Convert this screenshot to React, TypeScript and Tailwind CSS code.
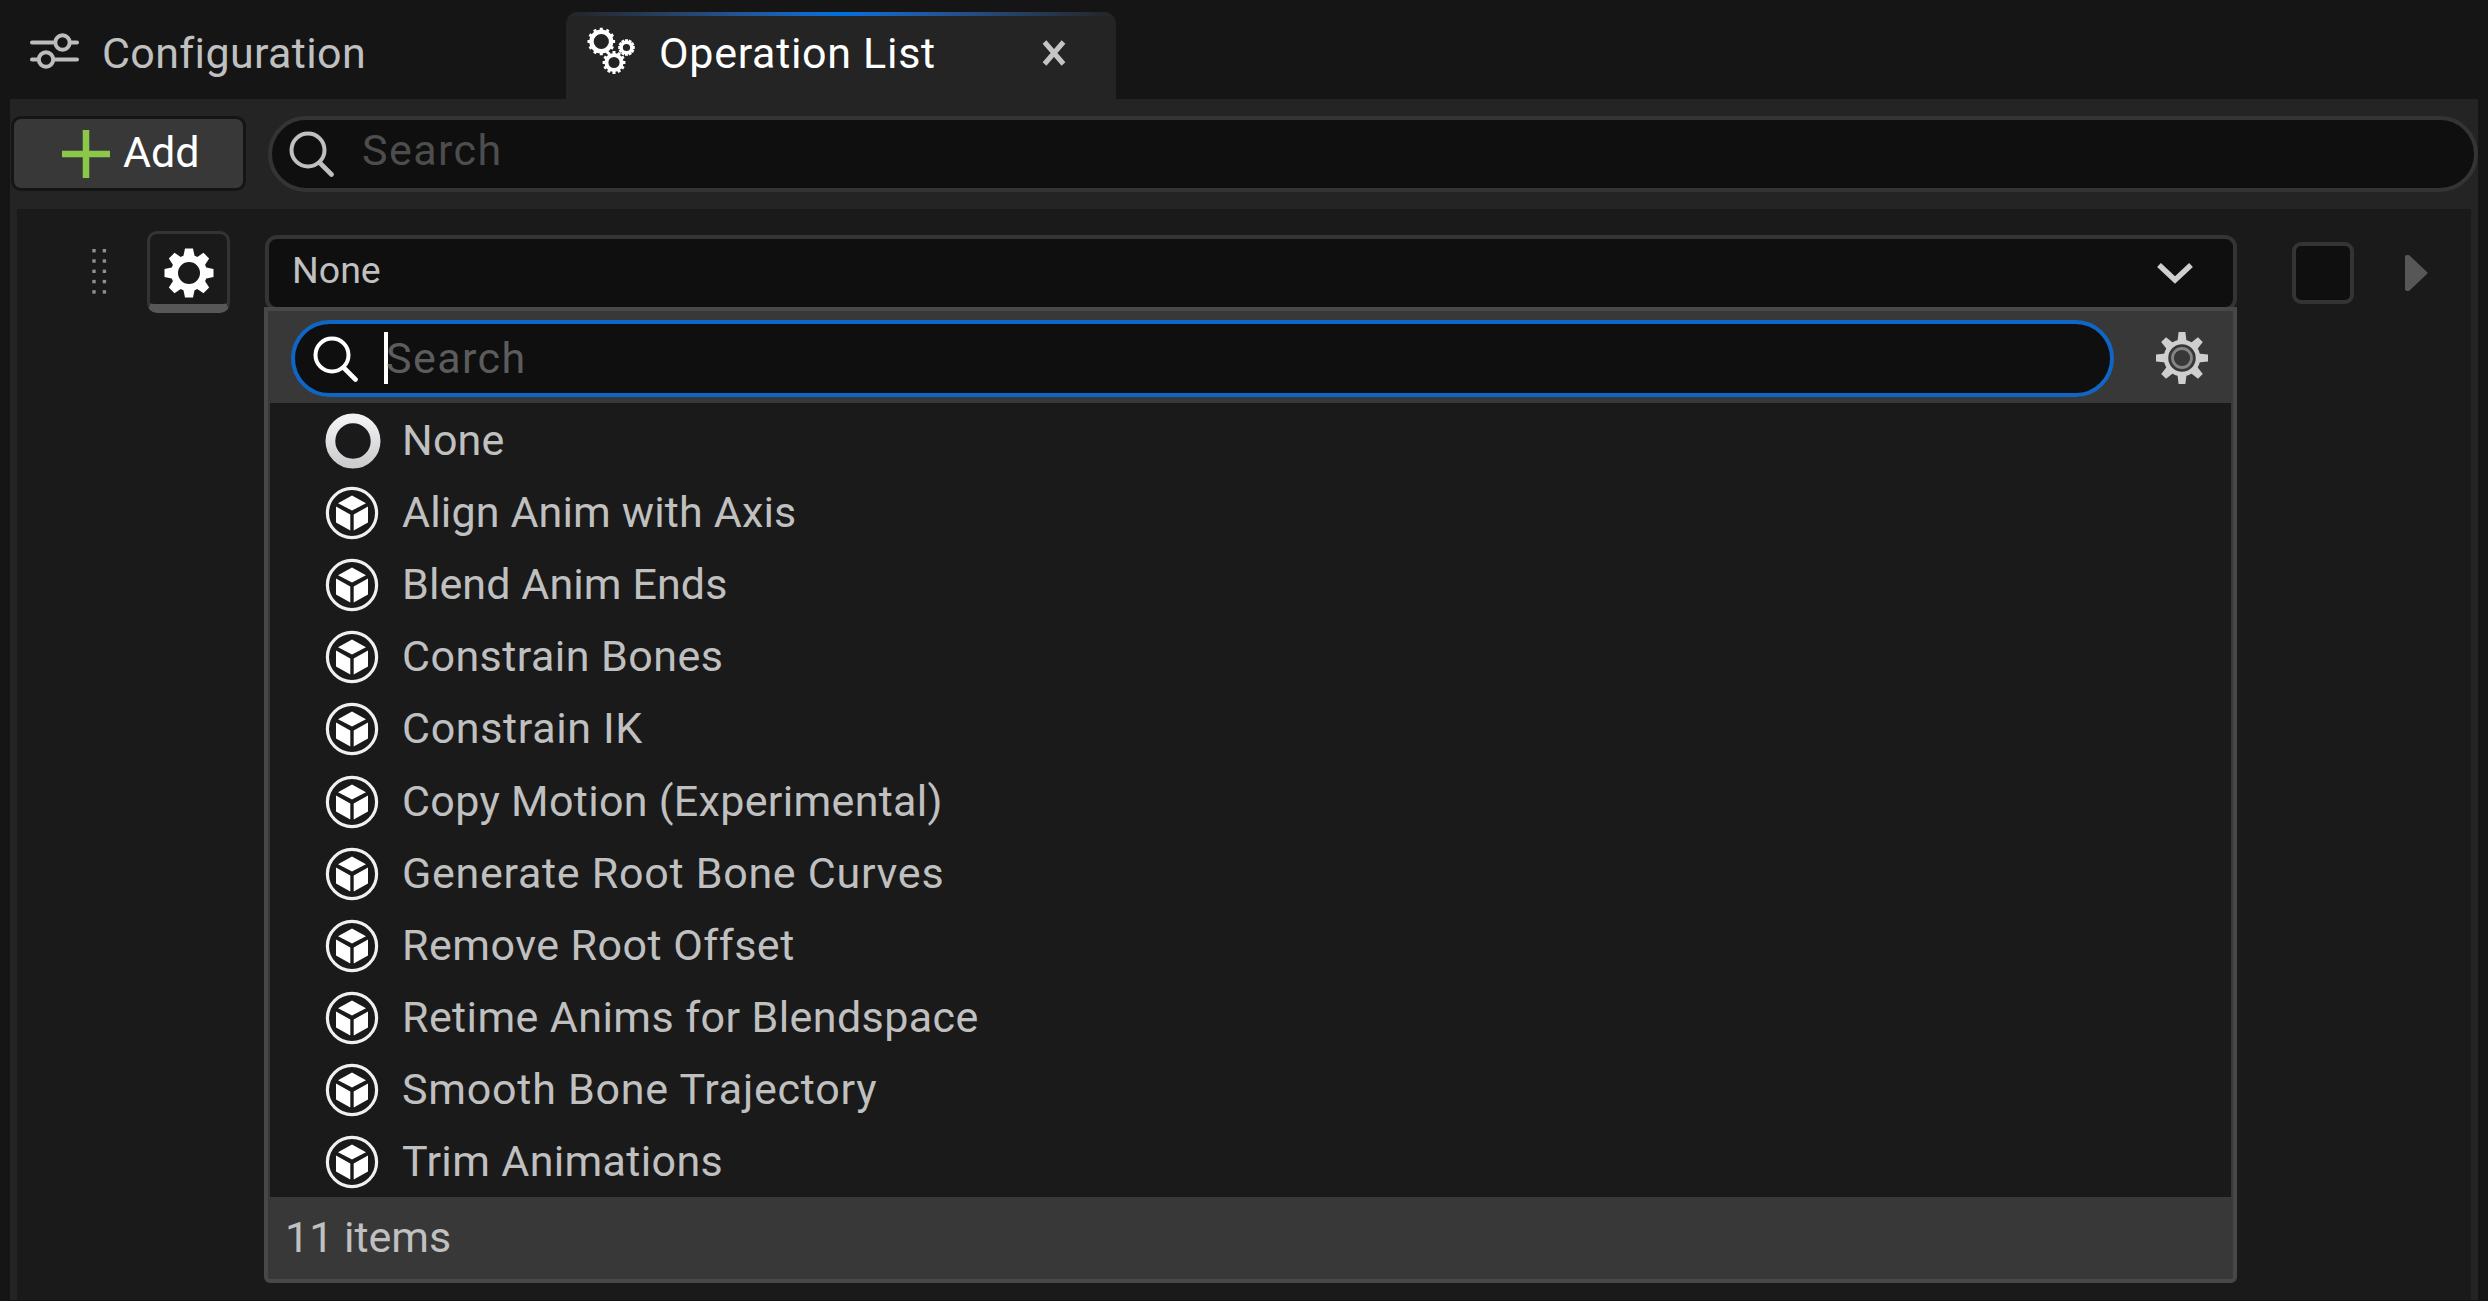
import React from "react";

const ITEMS = [
  { label: "None", tracking: "tracking-[0.2px]" },
  { label: "Align Anim with Axis", tracking: "tracking-[0.15px]" },
  { label: "Blend Anim Ends", tracking: "tracking-[0.1px]" },
  { label: "Constrain Bones", tracking: "tracking-[0.45px]" },
  { label: "Constrain IK", tracking: "tracking-[0.65px]" },
  { label: "Copy Motion (Experimental)", tracking: "tracking-[0.32px]" },
  { label: "Generate Root Bone Curves", tracking: "tracking-[0.72px]" },
  { label: "Remove Root Offset", tracking: "tracking-[0.48px]" },
  { label: "Retime Anims for Blendspace", tracking: "tracking-[0.41px]" },
  { label: "Smooth Bone Trajectory", tracking: "tracking-[0.76px]" },
  { label: "Trim Animations", tracking: "tracking-[0.35px]" },
];

const EIGHT = [0, 45, 90, 135, 180, 225, 270, 315];
const TWELVE = [0, 30, 60, 90, 120, 150, 180, 210, 240, 270, 300, 330];

function SlidersIcon() {
  return (
    <svg className="h-[36px] w-[50px] shrink-0" viewBox="0 0 50 36" fill="none" stroke="#bdbdbd" strokeWidth="4" strokeLinecap="round">
      <path d="M3 9.5H24M42 9.5H48M3 26.500H8M26 26.500H48" />
      <circle cx="33.500" cy="9.500" r="7.200" />
      <circle cx="17" cy="26.500" r="7.200" />
    </svg>
  );
}

function Cog({ cx, cy, r, w, tooth }: { cx: number; cy: number; r: number; w: number; tooth: number }) {
  return (
    <g stroke="#ffffff" fill="none">
      <circle cx={cx} cy={cy} r={r} strokeWidth={w} />
      {TWELVE.map((a) => (
        <path key={a} d={`M${cx} ${cy - r}V${cy - r - tooth}`} strokeWidth="3" transform={`rotate(${a} ${cx} ${cy})`} />
      ))}
    </g>
  );
}

function GearsIcon() {
  return (
    <svg className="h-[50px] w-[52px] shrink-0" viewBox="0 0 52 50">
      <Cog cx={15.3} cy={14.5} r={9.8} w={4.400} tooth={4} />
      <Cog cx={28} cy={35.5} r={7.600} w={4} tooth={3.8} />
      <Cog cx={40.500} cy={20.5} r={5.300} w={3.400} tooth={3} />
    </svg>
  );
}

function SearchIcon({ color }: { color: string }) {
  return (
    <svg className="h-[46px] w-[46px] shrink-0" viewBox="0 0 46 46" fill="none" stroke={color} strokeWidth="4" strokeLinecap="round">
      <circle cx="19" cy="19" r="16.500" />
      <path d="M31 32L42.500 43.500" strokeWidth="4.600" />
    </svg>
  );
}

function SolidGear() {
  return (
    <svg className="h-[50px] w-[50px]" viewBox="-25 -25 50 50" fill="none" stroke="#ffffff">
      <circle r="14.500" strokeWidth="7" />
      {EIGHT.map((a) => (
        <path key={a} d="M-6 -15L-4 -24.500H4L6 -15Z" fill="#ffffff" stroke="none" transform={`rotate(${a})`} />
      ))}
    </svg>
  );
}

function OutlineGear() {
  return (
    <svg className="h-[54px] w-[54px]" viewBox="-27 -27 54 54" fill="none" stroke="#cfcfcf">
      <circle r="16" strokeWidth="4.500" />
      <circle r="9.500" strokeWidth="2.800" stroke="#858585" />
      {EIGHT.map((a) => (
        <path key={a} d="M-4.600 -16L-3.400 -26H3.400L4.600 -16Z" fill="#cfcfcf" stroke="none" transform={`rotate(${a})`} />
      ))}
    </svg>
  );
}

function CubeIcon() {
  return (
    <svg className="h-[54px] w-[54px] shrink-0" viewBox="-27 -27 54 54">
      <circle r="24.600" fill="none" stroke="#f0f0f0" strokeWidth="3.200" />
      <path d="M0 -17.500L14 -9.800L0 -2.400L-14 -9.800Z" fill="#ffffff" />
      <path d="M-16 -6.500L-1.700 1.500V17.500L-16 9.500ZM16 -6.500L1.700 1.500V17.500L16 9.500Z" fill="#ffffff" />
    </svg>
  );
}

function RingIcon() {
  return (
    <svg className="h-[56px] w-[56px] shrink-0" viewBox="0 0 56 56">
      <defs>
        <linearGradient id="ring" x1="0" y1="0" x2="0" y2="1">
          <stop offset="0" stopColor="#f2f2f4" />
          <stop offset="1" stopColor="#cdcdcf" />
        </linearGradient>
      </defs>
      <circle cx="28" cy="28" r="22.600" fill="none" stroke="url(#ring)" strokeWidth="9.800" />
    </svg>
  );
}

function DragHandle() {
  return (
    <svg className="h-[50px] w-[16px] shrink-0" viewBox="0 0 16 50" fill="#8f8f8f">
      {[1, 11.3, 21.6, 31.9, 42.2].map((y) => (
        <g key={y}>
          <rect x="0.300" y={y} width="3.400" height="3.400" />
          <rect x="10.700" y={y} width="3.400" height="3.400" />
        </g>
      ))}
    </svg>
  );
}

function TabBar() {
  return (
    <div className="flex h-[99px] items-end">
      <div className="flex h-[87px] w-[566px] items-start pl-[29px] pt-[21px]">
        <SlidersIcon />
        <span className="ml-[23px] mt-[-5px] text-[43px] leading-[50px] tracking-[0.35px] text-[#c0c0c0]">Configuration</span>
      </div>
      <div className="h-[87px] w-[550px] overflow-hidden rounded-t-[12px] bg-[#242424]">
        <div className="h-[4px] bg-linear-to-r from-[#242424] via-[#0070e0] to-[#242424]" />
        <div className="flex items-start pl-[20px] pt-[11px]">
          <GearsIcon />
          <span className="ml-[21px] mt-[1px] w-[284px] whitespace-nowrap text-[43px] leading-[50px] tracking-[0.7px] text-white">Operation List</span>
          <svg className="ml-[99px] mt-[12px] h-[28px] w-[24px]" viewBox="0 0 24 28" stroke="#c4c4c4" strokeWidth="5">
            <path d="M2.500 3L21.500 25M21.500 3L2.500 25" />
          </svg>
        </div>
      </div>
    </div>
  );
}

function Toolbar() {
  return (
    <div className="flex h-[110px] items-start pt-[17px]">
      <button className="ml-[1px] flex h-[75px] w-[235px] items-center rounded-[10px] border-[3px] border-[#151515] bg-[#383838] pl-[48px]">
        <svg className="h-[48px] w-[48px]" viewBox="0 0 48 48" stroke="#8bc84a" strokeWidth="6.500">
          <path d="M24 0V48M0 24H48" />
        </svg>
        <span className="ml-[13px] mt-[-3px] text-[43px] leading-[50px] text-white">Add</span>
      </button>
      <div className="ml-[22px] flex h-[76px] flex-1 items-start rounded-full border-[4px] border-[#343434] bg-[#0f0f0f] pl-[17px] pt-[11px]">
        <SearchIcon color="#c0c0c0" />
        <span className="ml-[27px] mt-[-6px] text-[43px] leading-[50px] tracking-[1.4px] text-[#4d4d4d]">Search</span>
      </div>
    </div>
  );
}

function Dropdown() {
  return (
    <div className="absolute left-[-1px] top-[72px] z-10 flex h-[976px] w-[1973px] flex-col rounded-b-[6px] border-[4px] border-[#484848] bg-[#383838]">
      <div className="flex h-[92px] items-start pt-[9px]">
        <div className="ml-[23px] flex h-[77px] w-[1823px] items-start rounded-full border-[4px] border-[#0f66c6] bg-[#0f0f0f] pl-[18px] pt-[12px]">
          <SearchIcon color="#ffffff" />
          <div className="ml-[25px] mt-[-4px] h-[52px] w-[4px] bg-white" />
          <span className="ml-[-2px] mt-[-3px] text-[43px] leading-[50px] tracking-[1.4px] text-[#5c5c5c]">Search</span>
        </div>
        <div className="ml-[41px] mt-[11px]">
          <OutlineGear />
        </div>
      </div>
      <ul className="mx-[2px] flex h-[794px] flex-col bg-[#1a1a1a]">
        {ITEMS.map(({ label, tracking }, i) => (
          <li key={label} className="flex flex-1 items-center pl-[55px]">
            <div className="mt-[3px] w-[56px]">{i === 0 ? <RingIcon /> : <CubeIcon />}</div>
            <span className={`ml-[21px] mt-[1px] text-[43px] leading-[50px] text-[#c0c0c0] ${tracking}`}>{label}</span>
          </li>
        ))}
      </ul>
      <div className="pl-[17px] pt-[15px] text-[43px] leading-[50px] text-[#c0c0c0]">11 items</div>
    </div>
  );
}

export default function App() {
  return (
    <div className="h-[1301px] w-[2488px] overflow-hidden bg-[#151515] font-['Roboto',sans-serif]">
      <TabBar />
      <div className="mx-[10px] h-[1201px] bg-[#242424]">
        <Toolbar />
        <div className="mx-[7px] flex h-[1091px] items-start bg-[#1a1a1a]">
          <div className="ml-[75px] mt-[39px]">
            <DragHandle />
          </div>
          <button className="ml-[39px] mt-[22px] flex h-[82px] w-[83px] items-center justify-center overflow-hidden rounded-[10px] border-[3px] border-b-[9px] border-[#343434] border-b-[#575757] pt-[8px]">
            <SolidGear />
          </button>
          <div className="relative ml-[35px] mt-[26px] h-[76px] w-[1972px]">
            <div className="flex h-[76px] items-start rounded-[12px] border-[4px] border-[#343434] bg-[#0f0f0f] pl-[23px] pt-[8px]">
              <span className="flex-1 text-[37.500px] leading-[46px] text-[#c0c0c0]">None</span>
              <svg className="mr-[39px] mt-[14px] h-[24px] w-[38px]" viewBox="0 0 38 24" fill="none" stroke="#cfcfcf" strokeWidth="5.500">
                <path d="M3 4L19 19L35 4" />
              </svg>
            </div>
            <Dropdown />
          </div>
          <div className="ml-[55px] mt-[33px] h-[62px] w-[62px] rounded-[9px] border-[4px] border-[#343434] bg-[#0f0f0f]" />
          <svg className="ml-[51px] mt-[46px] h-[36px] w-[24px]" viewBox="0 0 24 36" fill="#575757">
            <path d="M0 2Q0 0 2 0H4L22 17Q23 18 22 19L4 36H2Q0 36 0 34Z" />
          </svg>
        </div>
      </div>
    </div>
  );
}
